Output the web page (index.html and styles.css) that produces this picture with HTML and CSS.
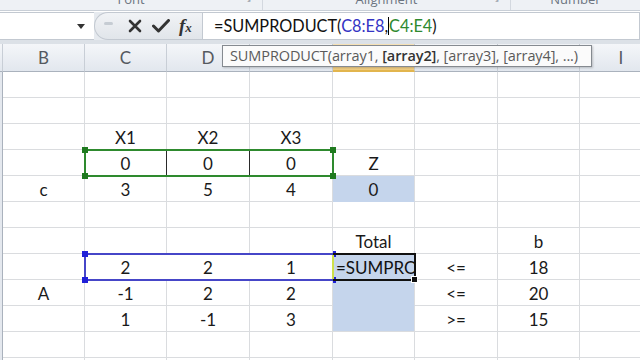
FILE: index.html
```html
<!DOCTYPE html>
<html lang="en">
<head>
  <meta charset="UTF-8">
  <title>SUMPRODUCT</title>
  <link rel="stylesheet" href="styles.css">
</head>
<body>
  <div class="ribbon">
    <div class="group g-font">Font <span class="launch">&#8600;</span></div>
    <div class="group g-align">Alignment <span class="launch">&#8600;</span></div>
    <div class="group g-num">Number</div>
  </div>

  <div class="formula-bar">
    <div class="name-box"><span class="caret"></span></div>
    <div class="fx-tools">
      <span class="grip"></span>
      <svg class="tool" width="14" height="14" viewBox="0 0 14 14"><path d="M2 2 L12 12 M12 2 L2 12" stroke="#333" stroke-width="2.6" stroke-linecap="round"/></svg>
      <svg class="tool check" width="18" height="14" viewBox="0 0 18 14"><path d="M1.5 7 L6.5 12 L16.5 1.5" stroke="#333" stroke-width="3" fill="none" stroke-linejoin="round" stroke-linecap="round"/></svg>
      <span class="fx">f<small>x</small></span>
    </div>
    <div class="formula-input">=SUMPRODUCT(<span class="ref-blue">C8:E8</span>,<span class="cursor"></span><span class="ref-green">C4:E4</span>)</div>
  </div>
  <div class="bar-gap"></div>

  <div class="sheet">
    <!-- header -->
    <div class="hd corner"></div>
    <div class="hd">B</div>
    <div class="hd">C</div>
    <div class="hd">D</div>
    <div class="hd">E</div>
    <div class="hd active">F</div>
    <div class="hd">G</div>
    <div class="hd">H</div>
    <div class="hd">I</div>

    <!-- row 1 -->
    <div class="rh"></div><div class="c"></div><div class="c"></div><div class="c"></div><div class="c"></div><div class="c"></div><div class="c"></div><div class="c"></div><div class="c"></div>
    <!-- row 2 -->
    <div class="rh"></div><div class="c"></div><div class="c"></div><div class="c"></div><div class="c"></div><div class="c"></div><div class="c"></div><div class="c"></div><div class="c"></div>
    <!-- row 3 -->
    <div class="rh"></div><div class="c"></div><div class="c">X1</div><div class="c">X2</div><div class="c">X3</div><div class="c"></div><div class="c"></div><div class="c"></div><div class="c"></div>
    <!-- row 4 -->
    <div class="rh"></div><div class="c"></div><div class="c dark-r">0</div><div class="c dark-r">0</div><div class="c">0</div><div class="c">Z</div><div class="c"></div><div class="c"></div><div class="c"></div>
    <!-- row 5 -->
    <div class="rh"></div><div class="c">c</div><div class="c">3</div><div class="c">5</div><div class="c">4</div><div class="c sel">0</div><div class="c"></div><div class="c"></div><div class="c"></div>
    <!-- row 6 -->
    <div class="rh"></div><div class="c"></div><div class="c"></div><div class="c"></div><div class="c"></div><div class="c"></div><div class="c"></div><div class="c"></div><div class="c"></div>
    <!-- row 7 -->
    <div class="rh"></div><div class="c"></div><div class="c"></div><div class="c"></div><div class="c"></div><div class="c">Total</div><div class="c"></div><div class="c">b</div><div class="c"></div>
    <!-- row 8 -->
    <div class="rh"></div><div class="c"></div><div class="c white">2</div><div class="c white">2</div><div class="c">1</div><div class="c sel edit">=SUMPRO</div><div class="c">&lt;=</div><div class="c">18</div><div class="c"></div>
    <!-- row 9 -->
    <div class="rh"></div><div class="c">A</div><div class="c">-1</div><div class="c">2</div><div class="c">2</div><div class="c sel"></div><div class="c">&lt;=</div><div class="c">20</div><div class="c"></div>
    <!-- row 10 -->
    <div class="rh"></div><div class="c"></div><div class="c">1</div><div class="c">-1</div><div class="c">3</div><div class="c sel last"></div><div class="c">&gt;=</div><div class="c">15</div><div class="c"></div>
    <!-- row 11 -->
    <div class="rh"></div><div class="c"></div><div class="c"></div><div class="c"></div><div class="c"></div><div class="c"></div><div class="c"></div><div class="c"></div><div class="c"></div>
    <!-- row 12 -->
    <div class="rh"></div><div class="c"></div><div class="c"></div><div class="c"></div><div class="c"></div><div class="c"></div><div class="c"></div><div class="c"></div><div class="c"></div>

    <!-- range highlights -->
    <div class="range green-range">
      <i class="h tl"></i><i class="h tr"></i><i class="h bl"></i><i class="h br"></i>
    </div>
    <div class="range blue-range">
      <i class="h tl"></i><i class="h tr thin"></i><i class="h bl"></i><i class="h br thin"></i>
    </div>
    <div class="edit-mark"></div>
    <div class="active-cell"><i class="fill-handle"></i></div>
  </div>

  <div class="tip">SUMPRODUCT(array1, <b>[array2]</b>, [array3], [array4], ...)</div>
</body>
</html>
```

FILE: styles.css
```css
body {
  margin: 0;
  width: 640px;
  height: 360px;
  overflow: hidden;
  background: #fff;
  font-family: Lato, "Liberation Sans", sans-serif;
  position: relative;
}

/* ribbon remains at the very top */
.ribbon {
  height: 10px;
  background: #eef1f5;
  border-bottom: 1px solid #c9cfd7;
  display: flex;
  overflow: hidden;
}
.group {
  font-family: "Open Sans", sans-serif;
  font-size: 13px;
  color: #6b7480;
  line-height: 12px;
  margin-top: -7px;
  text-align: center;
  border-right: 1px solid #d3d8df;
  position: relative;
}
.launch {
  position: absolute;
  right: 10px;
  font-size: 9px;
  color: #9aa2ac;
}
.g-font { width: 262px; }
.g-align { width: 247px; }
.g-num { flex: 1; border-right: none; }

/* formula bar */
.formula-bar {
  display: flex;
  height: 28px;
  margin-top: 1px;
  background: #e6eaef;
}
.name-box {
  width: 94px;
  background: #fff;
  border-top: 1px solid #c3c9d1;
  border-bottom: 1px solid #c3c9d1;
  position: relative;
}
.caret {
  position: absolute;
  left: 77px;
  top: 11px;
  border-left: 4px solid transparent;
  border-right: 4px solid transparent;
  border-top: 5px solid #333;
}
.fx-tools {
  width: 107px;
  display: flex;
  align-items: center;
  background: linear-gradient(#f1f3f6, #e1e5ea);
  border: 1px solid #c3c9d1;
  border-right: none;
  border-radius: 14px 0 0 14px;
}
.grip {
  width: 9px;
  height: 3px;
  background: #c6ccd3;
  border-radius: 2px;
  margin: -6px 0 0 9px;
}
.tool { margin-left: 15px; }
.check { margin-left: 10px; }
.fx {
  font-family: "Liberation Serif", serif;
  font-style: italic;
  font-weight: bold;
  font-size: 19px;
  color: #333;
  margin-left: 9px;
}
.fx small { font-size: 13px; }
.formula-input {
  flex: 1;
  background: #fff;
  border: 1px solid #c3c9d1;
  padding-left: 11px;
  font-size: 16.3px;
  line-height: 26px;
  color: #111;
}
.ref-blue { color: #3434c4; }
.ref-green { color: #2f8a2f; }
.cursor {
  display: inline-block;
  width: 1px;
  height: 18px;
  background: #000;
  vertical-align: -3px;
}
.bar-gap {
  height: 4px;
  background: #dce1e7;
}

/* sheet grid */
.sheet {
  display: grid;
  grid-template-columns: 3px 82px 82px 83px 83px 82px 83px 82px 83px;
  grid-template-rows: 28px repeat(12, 26px);
  height: 316px;
  overflow: hidden;
  position: relative;
}
.hd {
  background: linear-gradient(#f4f6f9, #e2e7ee);
  border-right: 1px solid #c8ced6;
  border-bottom: 1px solid #aab2bd;
  display: flex;
  align-items: center;
  justify-content: center;
  font-size: 17px;
  color: #55595f;
}
.hd.active {
  background: linear-gradient(#f9e4b8, #f0cc80);
  border-bottom: 2px solid #e2b54e;
}
.rh {
  background: #e4e8ee;
  border-right: 1px solid #aab2bd;
}
.c {
  border-right: 1px solid #dadcdf;
  border-bottom: 1px solid #dadcdf;
  display: flex;
  align-items: center;
  justify-content: center;
  padding-top: 2px;
  font-size: 17px;
  color: #1a1a1a;
  white-space: nowrap;
  overflow: hidden;
}
.c.dark-r { border-right-color: #2a2a2a; }
.c.white { border-right-color: #fff; }
.c.sel {
  background: #c5d5ec;
  border-bottom-color: #c5d5ec;
}
.c.sel.last { border-bottom-color: #dadcdf; }
.c.edit {
  justify-content: flex-start;
  padding-left: 3px;
  color: #111;
}

/* overlays on the grid */
.range {
  position: absolute;
  left: 84px;
  width: 250px;
  height: 28px;
  border: 2px solid;
  box-sizing: border-box;
}
.green-range { top: 105px; border-color: #2e8a2e; color: #1f7a1f; }
.blue-range { top: 209px; border-color: #4646c8; border-right: none; color: #2020d8; }
.h {
  position: absolute;
  width: 6px;
  height: 6px;
  background: currentColor;
}
.h.tl { left: -4px; top: -4px; }
.h.tr { right: -4px; top: -4px; }
.h.bl { left: -4px; bottom: -4px; }
.h.br { right: -4px; bottom: -4px; }
.h.thin { width: 3px; right: -2px; }
.edit-mark {
  position: absolute;
  left: 332px;
  top: 211px;
  width: 2px;
  height: 24px;
  background: #cfe04a;
}
.active-cell {
  position: absolute;
  left: 333px;
  top: 209px;
  width: 83px;
  height: 28px;
  border: 2px solid #111;
  border-left: none;
  box-sizing: border-box;
}
.fill-handle {
  position: absolute;
  right: -4px;
  bottom: -4px;
  width: 5px;
  height: 5px;
  background: #111;
  border: 1px solid #fff;
}

/* function tooltip */
.tip {
  position: absolute;
  left: 222px;
  top: 45px;
  width: 370px;
  height: 22px;
  box-sizing: border-box;
  background: #fbfbfb;
  border: 1px solid #858a90;
  box-shadow: 1px 1px 2px rgba(0,0,0,0.2);
  font-family: "Open Sans", sans-serif;
  font-size: 14.5px;
  letter-spacing: -0.1px;
  line-height: 20px;
  padding-left: 7px;
  color: #5a5a5a;
  white-space: nowrap;
}
.tip b { color: #333; font-weight: 600; }
```
